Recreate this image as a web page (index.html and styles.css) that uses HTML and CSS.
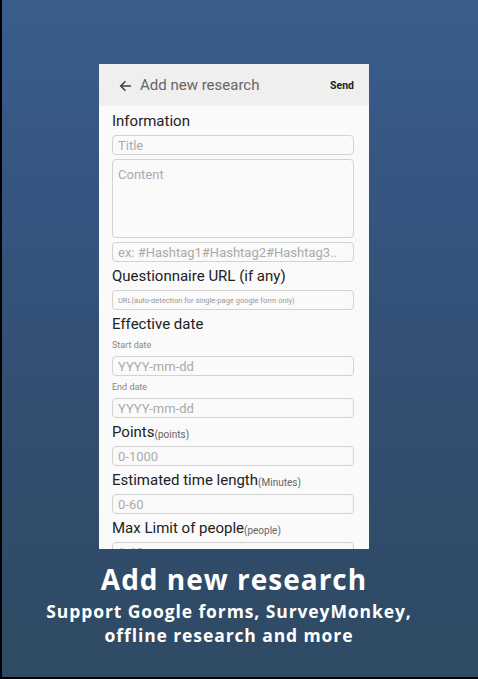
FILE: index.html
```html
<!DOCTYPE html>
<html>
<head>
<meta charset="utf-8">
<link rel="stylesheet" href="styles.css">
</head>
<body>
<div class="stage">
  <div class="phone">
    <div class="appbar">
      <svg class="back" width="13" height="12" viewBox="0 0 13 12"><path d="M12 6H2M6.5 1.2L1.7 6l4.8 4.8" fill="none" stroke="#444" stroke-width="1.6"/></svg>
      <span class="apptitle">Add new research</span>
      <span class="send">Send</span>
    </div>
    <div class="form">
      <div class="label first">Information</div>
      <div class="field"><span class="ph">Title</span></div>
      <div class="field area"><span class="ph">Content</span></div>
      <div class="field"><span class="ph">ex: #Hashtag1#Hashtag2#Hashtag3..</span></div>
      <div class="label">Questionnaire URL (if any)</div>
      <div class="field"><span class="ph tiny">URL(auto-detection for single-page google form only)</span></div>
      <div class="label">Effective date</div>
      <div class="sublabel first">Start date</div>
      <div class="field"><span class="ph">YYYY-mm-dd</span></div>
      <div class="sublabel">End date</div>
      <div class="field"><span class="ph">YYYY-mm-dd</span></div>
      <div class="label">Points<span class="unit">(points)</span></div>
      <div class="field"><span class="ph">0-1000</span></div>
      <div class="label">Estimated time length<span class="unit">(Minutes)</span></div>
      <div class="field"><span class="ph">0-60</span></div>
      <div class="label">Max Limit of people<span class="unit">(people)</span></div>
      <div class="field"><span class="ph">1-60</span></div>
    </div>
  </div>
  <div class="caption">
    <div class="headline">Add new research</div>
    <div class="sub">Support Google forms, SurveyMonkey,<br>offline research and more</div>
  </div>
</div>
</body>
</html>
```
FILE: styles.css
```css
html, body {
  margin: 0;
  padding: 0;
}
body {
  width: 478px;
  height: 679px;
  overflow: hidden;
  background: #000;
}
.stage {
  box-sizing: border-box;
  height: 677px;
  margin-left: 2px;
  width: 476px;
  background: linear-gradient(180deg, #3a5d8a 0%, #355580 30%, #314d6d 70%, #2f4a63 100%);
  display: flex;
  flex-direction: column;
  align-items: flex-start;
}
.phone {
  margin-top: 64px;
  margin-left: 97px;
  width: 270px;
  height: 485px;
  background: #fafafa;
  overflow: hidden;
  font-family: Roboto, "Noto Sans", sans-serif;
}
.appbar {
  height: 42px;
  background: #efefef;
  display: flex;
  align-items: center;
  padding: 0 15px 0 20px;
}
.back {
  margin-right: 8px;
  margin-top: 1px;
}
.apptitle {
  font-size: 15px;
  color: #666;
  flex: 1;
}
.send {
  font-size: 10.5px;
  font-weight: bold;
  color: #222;
}
.form {
  padding: 0 15px 0 13px;
  display: flex;
  flex-direction: column;
}
.label {
  font-size: 15px;
  color: #222;
  line-height: 18px;
  height: 18px;
  white-space: nowrap;
  margin: 1px 0 5px;
}
.label.first {
  margin-top: 6px;
}
.unit {
  font-size: 10px;
  line-height: 0;
  vertical-align: -1px;
  color: #666;
}
.sublabel {
  font-size: 9px;
  color: #888;
  line-height: 11px;
  margin: 2px 0 5px;
}
.sublabel.first {
  margin-top: 2px;
  margin-bottom: 5px;
}
.field {
  box-sizing: border-box;
  height: 20px;
  flex-shrink: 0;
  border: 1px solid #d2d2d2;
  border-radius: 4px;
  padding: 0 5px;
  margin-bottom: 4px;
  display: flex;
  align-items: center;
}
.field.area {
  height: 79px;
  align-items: flex-start;
  padding-top: 7px;
}
.ph {
  font-size: 13px;
  color: #aaa;
  white-space: nowrap;
}
.ph.tiny {
  font-size: 7.5px;
  color: #999;
}
.caption {
  align-self: stretch;
  margin-top: 12px;
  text-align: center;
  color: #fff;
  font-family: "Open Sans", Lato, sans-serif;
  font-weight: bold;
}
.headline {
  font-size: 28px;
  line-height: 36px;
  letter-spacing: 1px;
  padding-right: 12px;
}
.sub {
  font-size: 17.5px;
  line-height: 24px;
  letter-spacing: 0.9px;
  margin-top: 2px;
  padding-right: 22px;
}
```
